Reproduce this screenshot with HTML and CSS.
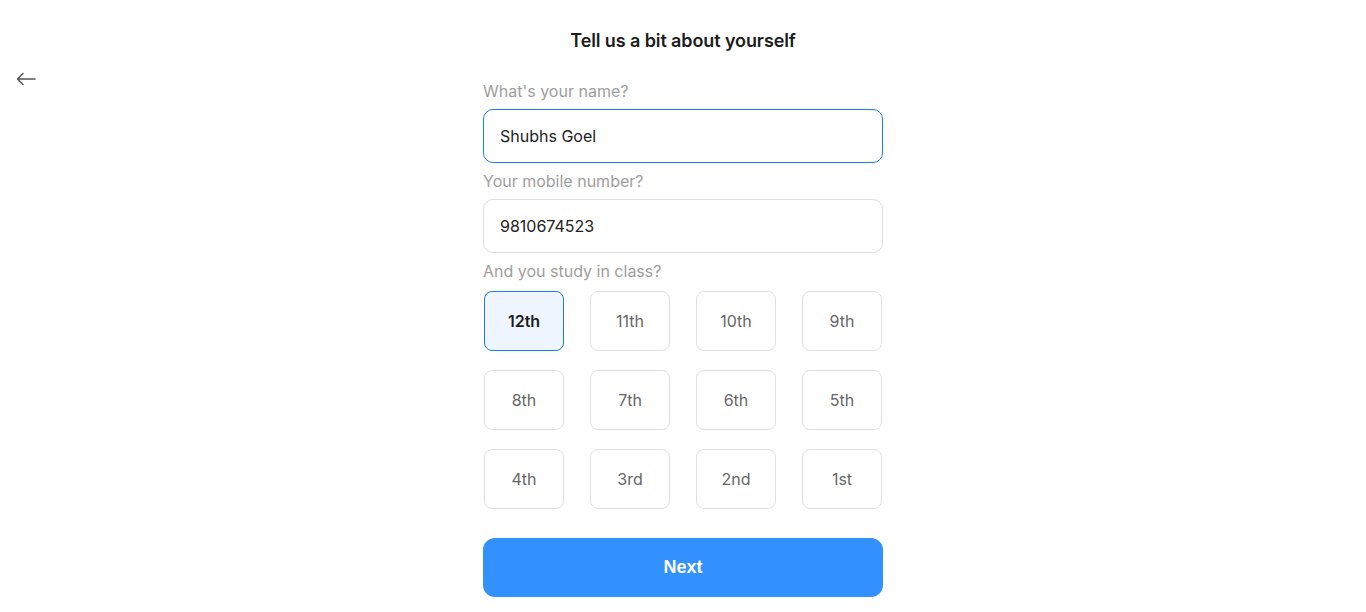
FILE: index.html
```html
<!DOCTYPE html>
<html>
<head>
<meta charset="utf-8">
<link rel="stylesheet" href="styles.css">
</head>
<body>
<div class="page">
  <button class="back" aria-label="Back">
    <svg width="20" height="14" viewBox="0 0 20 14" fill="none" stroke="#555" stroke-width="1.5" stroke-linecap="round" stroke-linejoin="round"><path d="M19 7H1.5M7 1.5L1.5 7L7 12.5"/></svg>
  </button>
  <main class="form">
    <h1 class="title">Tell us a bit about yourself</h1>
    <label class="label">What's your name?</label>
    <div class="input focused">Shubhs Goel</div>
    <label class="label">Your mobile number?</label>
    <div class="input">9810674523</div>
    <label class="label">And you study in class?</label>
    <div class="grid">
      <div class="opt selected">12th</div>
      <div class="opt">11th</div>
      <div class="opt">10th</div>
      <div class="opt">9th</div>
      <div class="opt">8th</div>
      <div class="opt">7th</div>
      <div class="opt">6th</div>
      <div class="opt">5th</div>
      <div class="opt">4th</div>
      <div class="opt">3rd</div>
      <div class="opt">2nd</div>
      <div class="opt">1st</div>
    </div>
    <button class="next">Next</button>
  </main>
</div>
</body>
</html>
```
FILE: styles.css
```css
* { box-sizing: border-box; }
html, body { margin: 0; padding: 0; background: #fff; }
body { font-family: Inter, "Noto Sans", sans-serif; color: #222; }
.page { position: relative; width: 1366px; height: 612px; overflow: hidden; }
.back {
  position: absolute; left: 16px; top: 72px;
  background: none; border: 0; padding: 0; width: 20px; height: 14px; cursor: pointer;
}
.back svg { display: block; }
.form { width: 400px; margin: 0 auto; padding-top: 29px; display: flex; flex-direction: column; }
.title { margin: 0 0 26px; font-size: 18px; font-weight: 600; line-height: 24px; text-align: center; color: #1c1c1c; letter-spacing: -0.1px; }
.label { font-size: 16px; line-height: 24px; color: #9e9e9e; margin-bottom: 6px; }
.input {
  height: 54px; border: 1px solid #dedede; border-radius: 10px; padding: 0 16px;
  display: flex; align-items: center; font-size: 16px; color: #222; margin-bottom: 6px;
}
.input.focused { border-color: #1a7fe8; }
.grid {
  margin-top: 2px; padding: 0 1px;
  display: grid; grid-template-columns: repeat(4, 80px); justify-content: space-between; row-gap: 19px;
}
.opt {
  height: 60px; border: 1px solid #e0e0e0; border-radius: 8px;
  display: flex; align-items: center; justify-content: center; font-size: 16px; color: #666;
}
.opt.selected { background: #eef5ff; border-color: #1a7fe8; color: #1c1c1c; font-weight: 600; }
.next {
  margin-top: 29px; height: 59px; border: 0; border-radius: 12px; background: #3391ff;
  color: #fff; font-family: "Liberation Sans", Arial, sans-serif; font-size: 18px; font-weight: 700; cursor: pointer;
}
```
